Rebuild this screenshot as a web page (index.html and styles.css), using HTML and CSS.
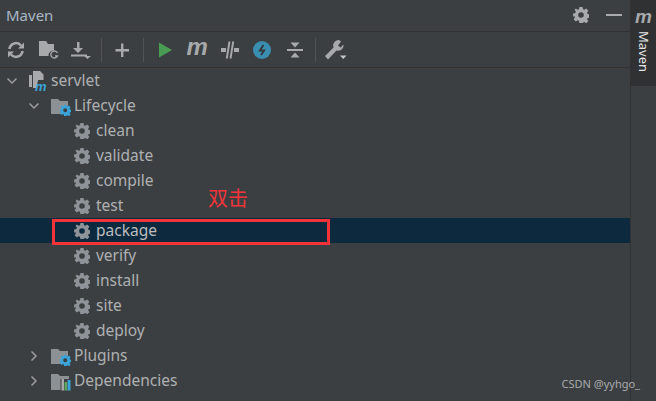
FILE: index.html
```html
<!DOCTYPE html>
<html lang="en">
<head>
<meta charset="utf-8">
<title>Maven</title>
<link rel="stylesheet" href="styles.css">
</head>
<body>
<svg class="defs" width="0" height="0" aria-hidden="true">
  <defs>
    <symbol id="gear" viewBox="0 0 16 16">
      <path fill-rule="evenodd" d="M6.400 0h3.200l.4 2.200 1.300.6 1.900-1.300 2.200 2.200-1.300 1.900.6 1.300 2.200.4v3.200l-2.200.4-.6 1.300 1.300 1.900-2.200 2.200-1.900-1.300-1.300.6-.4 2.200H6.400L6 13.800l-1.300-.6-1.900 1.300-2.200-2.200 1.300-1.900-.6-1.300L.1 9.700V6.500l2.200-.4.6-1.300L1.600 2.900l1.200-1.400 1.900 1.300L6 2.200zM8 5.200a2.800 2.800 0 1 0 0 5.600 2.800 2.800 0 0 0 0-5.600z"/>
    </symbol>
    <symbol id="folder-gear" viewBox="0 0 20 18">
      <path class="fill-folder" d="M0 1h7l2 2h8v5.500a6 6 0 0 0-6.500 7.500H0z"/>
      <use href="#gear" class="gear-blue" x="8.500" y="6.500" width="11.500" height="11.500"/>
    </symbol>
  </defs>
</svg>
<div class="window">
  <main class="panel">
    <header class="title">
      <span class="title-text">Maven</span>
      <span class="title-actions">
        <svg class="ic-16"><use href="#gear" class="fill-grey"/></svg>
        <span class="minimize"></span>
      </span>
    </header>
    <div class="toolbar">
      <span class="slot"><svg class="tool" viewBox="0 0 18 18"><path class="stroke-grey" d="M2.500 8a6.500 6.500 0 0 1 11.500-3.500M15.500 10a6.500 6.500 0 0 1-11.500 3.500"/><path class="fill-grey" d="M17 1.500v6h-6zM1 16.500v-6h6z"/></svg></span>
      <span class="slot"><svg class="tool tool-wide" viewBox="0 0 20 18"><path class="fill-grey" d="M0 0h7l2 3h6v6.500a5 5 0 0 0-5.500 5.500H0z"/><path class="stroke-thin" d="M18.500 12a3.500 3.500 0 1 0 0 3h-2.500"/></svg></span>
      <span class="slot"><svg class="tool tool-wide" viewBox="0 0 20 18"><path class="fill-grey" d="M6 1h2.500v6H12l-5 5-5 -5h4zM0 13.500h16v2H0zM13 15h7l-3.500 3z"/></svg></span>
      <span class="sep sep-a"></span>
      <span class="slot"><svg class="tool" viewBox="0 0 18 18"><path class="fill-grey" d="M8 2.500h2.400V8H16v2.400h-5.600V16H8v-5.600H2.500V8H8z"/></svg></span>
      <span class="sep sep-b"></span>
      <span class="slot"><svg class="tool" viewBox="0 0 18 18"><path class="fill-green" d="M3 1.500l13 7.500-13 7.500z"/></svg></span>
      <span class="slot"><span class="m-icon">m</span></span>
      <span class="slot"><svg class="tool" viewBox="0 0 18 18"><path class="fill-grey" d="M0 7h5v4H0zM13 7h5v4h-5z"/><path class="stroke-bar" d="M8.500 0.500L5.800 17.500M12.200 0.500L9.500 17.500"/></svg></span>
      <span class="slot"><svg class="tool" viewBox="0 0 18 18"><circle class="fill-blue" cx="9" cy="9" r="9"/><path class="stroke-bolt" d="M10.500 4L6.800 9.500h4.400L8 14"/></svg></span>
      <span class="slot"><svg class="tool" viewBox="0 0 18 18"><path class="fill-grey" d="M1 8h16v2H1zM4.500 1.500h9L9 6.500zM9 11.500l4.500 5h-9z"/></svg></span>
      <span class="sep sep-c"></span>
      <span class="slot"><svg class="tool tool-wrench" viewBox="0 0 22 20"><path class="fill-grey" d="M13.500 0a5.500 5.500 0 0 0-5 7.500L0 16l3 3.500 8.500-9a5.500 5.500 0 0 0 7-6L15.500 7.500 13 5.500 16 1.500A5.500 5.500 0 0 0 13.500 0z"/><path class="fill-light" d="M15 15.500h6.500l-3.250 3.500z"/></svg></span>
    </div>
    <ul class="tree">
      <li class="row lvl-0">
        <svg class="chev" viewBox="0 0 12 12"><path d="M1.500 3.500L6 8l4.500-4.500"/></svg>
        <svg class="node node-root" viewBox="0 0 18 20"><path class="fill-grey" d="M0 4h3v12H0zM4 0h7l3.500 3.500V9H9l-1.500 8H4z"/><text class="node-m" x="6" y="19.500">m</text></svg>
        <span>servlet</span>
      </li>
      <li class="row lvl-1">
        <svg class="chev" viewBox="0 0 12 12"><path d="M1.500 3.500L6 8l4.500-4.500"/></svg>
        <svg class="node node-folder"><use href="#folder-gear"/></svg>
        <span>Lifecycle</span>
      </li>
      <li class="row lvl-2"><svg class="gear"><use href="#gear"/></svg><span>clean</span></li>
      <li class="row lvl-2"><svg class="gear"><use href="#gear"/></svg><span>validate</span></li>
      <li class="row lvl-2"><svg class="gear"><use href="#gear"/></svg><span>compile</span></li>
      <li class="row lvl-2"><svg class="gear"><use href="#gear"/></svg><span>test</span></li>
      <li class="row lvl-2 selected"><svg class="gear"><use href="#gear"/></svg><span>package</span></li>
      <li class="row lvl-2"><svg class="gear"><use href="#gear"/></svg><span>verify</span></li>
      <li class="row lvl-2"><svg class="gear"><use href="#gear"/></svg><span>install</span></li>
      <li class="row lvl-2"><svg class="gear"><use href="#gear"/></svg><span>site</span></li>
      <li class="row lvl-2"><svg class="gear"><use href="#gear"/></svg><span>deploy</span></li>
      <li class="row lvl-1">
        <svg class="chev" viewBox="0 0 12 12"><path d="M3.500 1.500L8 6l-4.500 4.500"/></svg>
        <svg class="node node-folder"><use href="#folder-gear"/></svg>
        <span>Plugins</span>
      </li>
      <li class="row lvl-1">
        <svg class="chev" viewBox="0 0 12 12"><path d="M3.500 1.500L8 6l-4.500 4.500"/></svg>
        <svg class="node node-folder" viewBox="0 0 20 18"><path class="fill-folder" d="M0 1h7l2 2h9v3H9.500v11H0z"/><rect class="bar-grey" x="10.500" y="6" width="2.500" height="11.500"/><rect class="bar-green" x="13.500" y="9" width="2.500" height="8.500"/><rect class="bar-blue" x="16.500" y="7" width="3" height="10.500"/></svg>
        <span>Dependencies</span>
      </li>
    </ul>
  </main>
  <aside class="strip">
    <div class="strip-btn">
      <span class="strip-m">m</span>
      <span class="strip-label">Maven</span>
    </div>
  </aside>
  <div class="callout-box"></div>
  <div class="callout-text">双击</div>
  <div class="watermark">CSDN @yyhgo_</div>
</div>
</body>
</html>
```
FILE: styles.css
```css
* { box-sizing: border-box; }
html, body { margin: 0; padding: 0; }
body { background: #3c3f41; overflow: hidden; }
.defs { position: absolute; }
.window {
  position: relative;
  display: flex;
  width: 656px;
  height: 401px;
  overflow: hidden;
  font-family: "Noto Sans", "Open Sans", sans-serif;
  color: #afb1b3;
}
.panel { width: 630px; flex: none; }
.title {
  height: 32px;
  display: flex;
  align-items: center;
  justify-content: space-between;
  padding: 0 8px 1px 6px;
  border-bottom: 1px solid #323232;
}
.title-text { font-size: 15px; color: #a9b7c6; }
.title-actions { display: flex; align-items: center; gap: 17px; }
.ic-16 { width: 16px; height: 16px; }
.minimize { width: 16px; height: 2px; background: #a7a9ab; }
.toolbar {
  height: 36px;
  display: flex;
  align-items: center;
  border-bottom: 1px solid #323232;
}
.slot {
  width: 32.500px;
  height: 24px;
  flex: none;
  display: flex;
  align-items: center;
  justify-content: center;
}
.tool { width: 18px; height: 18px; flex: none; }
.tool-wide { width: 20px; }
.tool-wrench { width: 22px; height: 20px; margin-left: 8px; }
.sep { width: 1px; height: 24px; background: #515355; flex: none; }
.sep-a { margin: 0 4px 0 3.500px; }
.sep-b { margin: 0 5px 0 4px; }
.sep-c { margin: 0 0 0 3.500px; }
.m-icon {
  font: italic 700 24px/24px "Liberation Sans", sans-serif;
  color: #a7a9ab;
  margin-top: -6px;
}
.fill-grey { fill: #a7a9ab; }
.fill-light { fill: #c8c9ca; }
.fill-folder { fill: #8c9195; }
.fill-green { fill: #499c54; }
.fill-blue { fill: #3a8fb0; }
.stroke-grey { fill: none; stroke: #a7a9ab; stroke-width: 2.600; }
.stroke-thin { fill: none; stroke: #a7a9ab; stroke-width: 1.400; }
.stroke-bar { fill: none; stroke: #a7a9ab; stroke-width: 1.900; }
.stroke-bolt { fill: none; stroke: #333638; stroke-width: 1.800; }
.tree { list-style: none; margin: 0; padding: 0; }
.row {
  height: 25px;
  display: flex;
  align-items: center;
  font-size: 15.500px;
  line-height: 25px;
  color: #aeb0b2;
}
.lvl-0 { padding-left: 6px; }
.lvl-1 { padding-left: 28px; }
.lvl-2 { padding-left: 74px; }
.selected { background: #0d293e; color: #bbbdbf; }
.chev { width: 12px; height: 12px; flex: none; margin-right: 11px; }
.chev path { fill: none; stroke: #9a9c9e; stroke-width: 1.500; }
.node { width: 20px; height: 18px; flex: none; margin-right: 3px; overflow: visible; }
.node-folder { margin-top: 2px; }
.node-root { width: 18px; height: 20px; margin: 0 4px 0 0; }
.node-m { font: italic 700 13px "Liberation Sans", sans-serif; fill: #3aa3d8; }
.gear-blue { fill: #3aa3d8; }
.bar-grey { fill: #a7a9ab; }
.bar-green { fill: #5ba55f; }
.bar-blue { fill: #3aa3d8; }
.gear { width: 16px; height: 16px; flex: none; margin-right: 6px; fill: #8d9398; }
.strip {
  width: 26px;
  flex: none;
  background: #3c3f41;
  border-left: 1px solid #323232;
}
.strip-btn {
  height: 86px;
  background: #2f3133;
  display: flex;
  flex-direction: column;
  align-items: center;
  padding-top: 7px;
}
.strip-m {
  font: italic 700 19px/19px "Liberation Sans", sans-serif;
  color: #a7a9ab;
}
.strip-label {
  writing-mode: vertical-rl;
  font-size: 13px;
  line-height: 16px;
  color: #e4e4e4;
  margin-top: 5px;
}
.callout-box {
  position: absolute;
  left: 52px;
  top: 219px;
  width: 278px;
  height: 26px;
  border: 3px solid #f2343a;
}
.callout-text {
  position: absolute;
  left: 208px;
  top: 185px;
  font-family: "Noto Sans CJK SC", sans-serif;
  font-size: 20px;
  line-height: 26px;
  color: #f2343a;
}
.watermark {
  position: absolute;
  right: 16px;
  top: 376px;
  font-size: 11px;
  line-height: 16px;
  color: #a8aaac;
}
```
